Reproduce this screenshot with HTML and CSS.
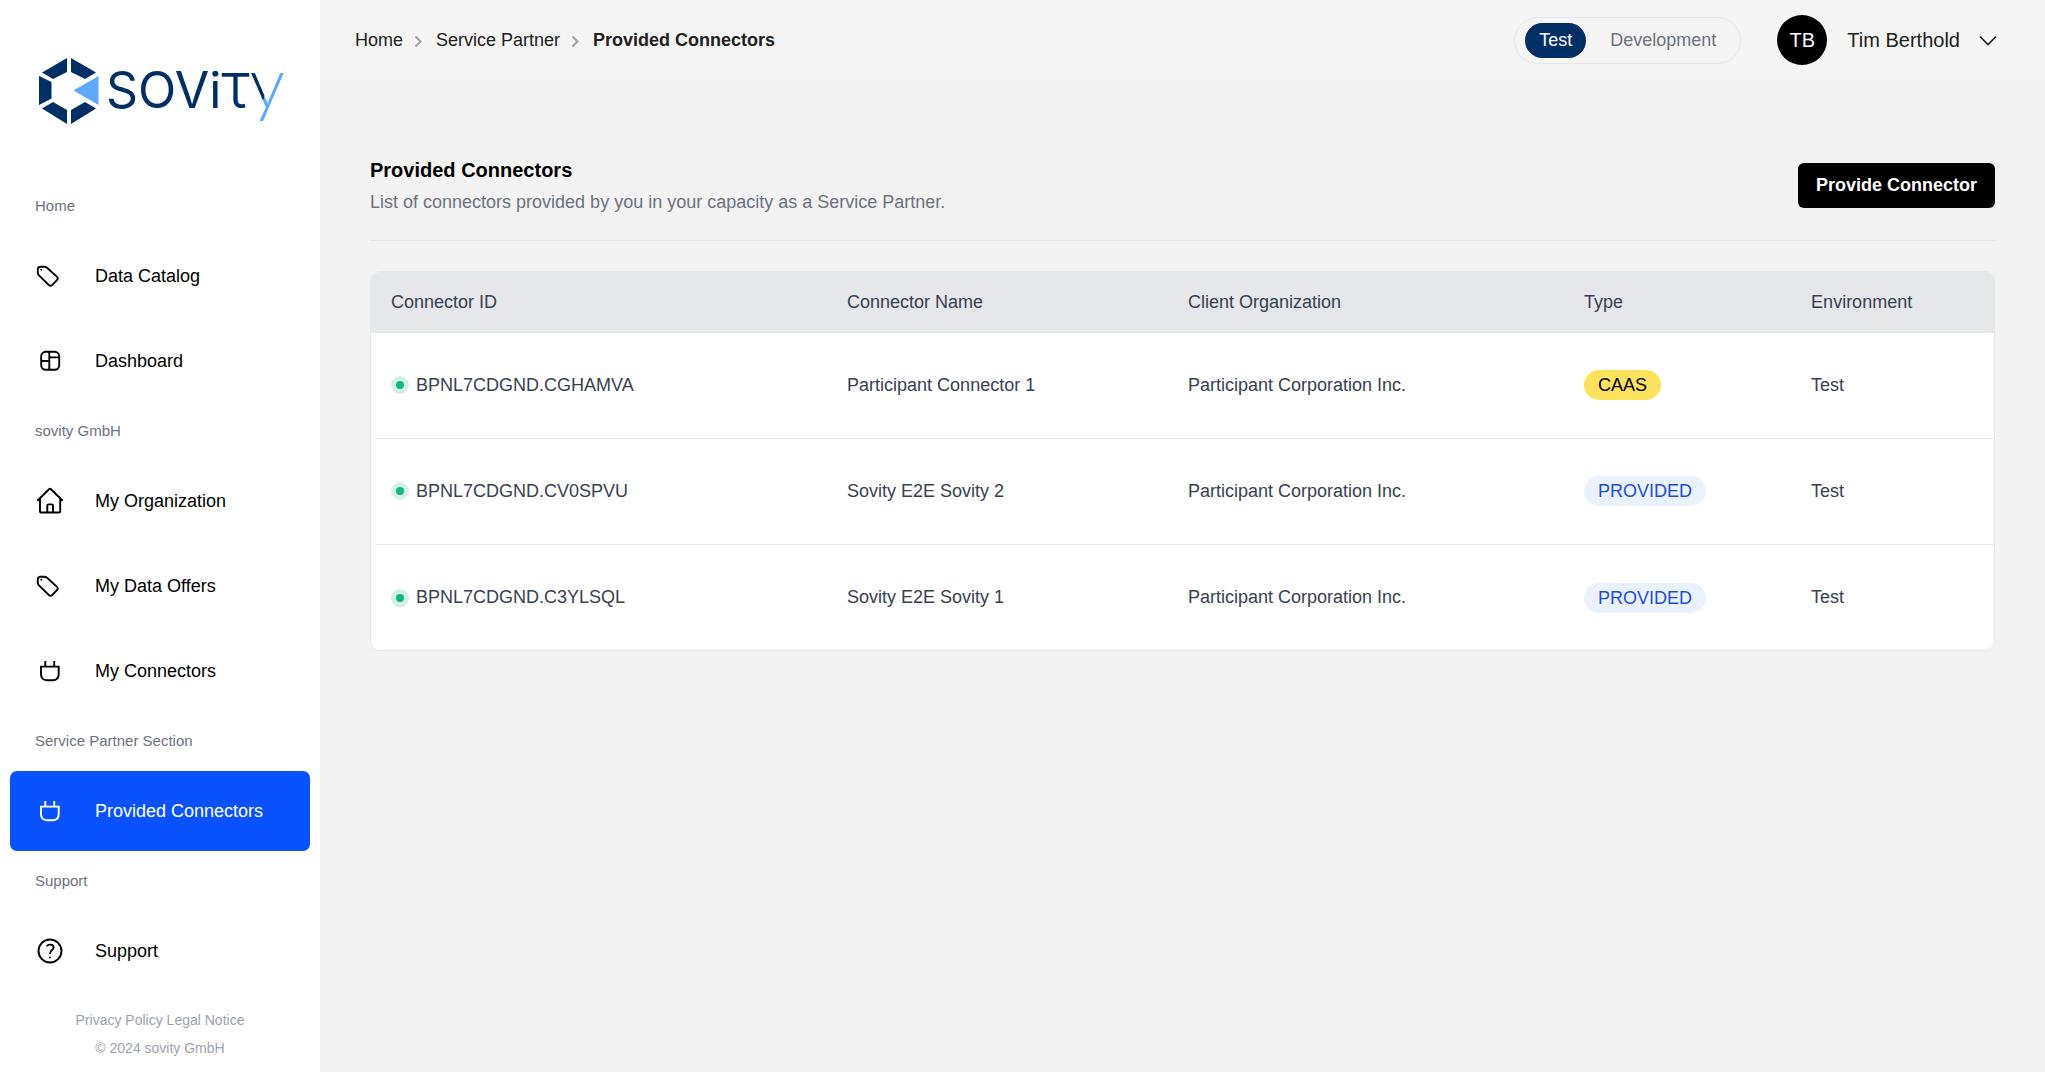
FILE: index.html
```html
<!DOCTYPE html>
<html lang="en">
<head>
<meta charset="utf-8">
<meta name="viewport" content="width=device-width, initial-scale=1">
<title>Provided Connectors</title>
<link rel="stylesheet" href="styles.css">
</head>
<body>
<svg class="sprite" aria-hidden="true">
  <symbol id="icon-tag" viewBox="0 0 30 30">
    <path d="M2.8 11.5V8.5Q2.8 5.7 5.6 5.7H9.2Q10.8 5.7 12 6.8L21.8 15.6Q23.6 17.2 22 19L17.4 23.8Q15.6 25.6 13.8 24L4 14.4Q2.8 13.2 2.8 11.5Z"/>
    <circle class="solid" cx="6.2" cy="8.7" r="0.9"/>
  </symbol>
  <symbol id="icon-dashboard" viewBox="0 0 30 30">
    <rect x="6.2" y="5.8" width="18" height="18" rx="4.5"/>
    <path d="M14.3 5.8V23.8M14.3 11.4H24.2M6.2 15H14.3"/>
  </symbol>
  <symbol id="icon-home" viewBox="0 0 30 30">
    <path d="M2.3 14.8L14 3.3Q15 2.4 16 3.3L27.7 14.8M5 12.5V25.5Q5 26.5 6 26.5H24.2Q25.2 26.5 25.2 25.5V12.5M12.3 26.5V19.6Q12.3 18.4 13.5 18.4H16.8Q18 18.4 18 19.6V26.5"/>
  </symbol>
  <symbol id="icon-plug" viewBox="0 0 30 30">
    <path d="M6 10.6H23.7V18.2Q23.7 24.2 17.7 24.2H12Q6 24.2 6 18.2ZM10.3 10.6V5M19.2 10.6V5"/>
  </symbol>
  <symbol id="icon-help" viewBox="0 0 30 30">
    <circle cx="15" cy="15" r="11.5"/>
    <path d="M11.8 10.2C13 7.9 18.6 7.9 18.6 11.4C18.6 14.2 15 14 15 18"/>
    <circle class="solid" cx="15" cy="21.5" r="1"/>
  </symbol>
  <symbol id="icon-next" viewBox="0 0 20 20">
    <path d="M7.5 6.5L12.500 11.5L7.500 16.500"/>
  </symbol>
</svg>

<div class="app">
  <aside class="sidebar">
    <a class="logo" href="#">
      <svg viewBox="0 0 244 68" role="img" aria-label="sovity">
        <defs>
          <linearGradient id="y-split" gradientUnits="userSpaceOnUse" x1="229" y1="31" x2="237" y2="34">
            <stop offset="0" stop-color="#002f66"/>
            <stop offset="0" stop-color="#5fa8ff"/>
          </linearGradient>
        </defs>
        <g class="logo-navy">
          <path d="M28 2V16L14 23L3 16.500ZM32 2V16L46 23L57 16.500ZM0 20L12.500 26V42.500L0 49ZM28 68V54L14 46L3 52.500ZM32 68V54L46 46L57 52.500Z"/>
          <text class="mark" x="67" y="52">SOVi<tspan class="mark-bar">τ</tspan><tspan class="mark-tail" fill="url(#y-split)">y</tspan></text>
        </g>
        <path class="logo-sky" d="M34.500 34.500L59.500 20V49Z"/>
      </svg>
    </a>
    <nav class="nav" aria-label="Main">
      <h2 class="nav-label">Home</h2>
      <ul class="nav-list">
        <li><a class="nav-item" href="#"><svg class="icon"><use href="#icon-tag"/></svg>Data Catalog</a></li>
        <li><a class="nav-item" href="#"><svg class="icon"><use href="#icon-dashboard"/></svg>Dashboard</a></li>
      </ul>
      <h2 class="nav-label">sovity GmbH</h2>
      <ul class="nav-list">
        <li><a class="nav-item" href="#"><svg class="icon"><use href="#icon-home"/></svg>My Organization</a></li>
        <li><a class="nav-item" href="#"><svg class="icon"><use href="#icon-tag"/></svg>My Data Offers</a></li>
        <li><a class="nav-item" href="#"><svg class="icon"><use href="#icon-plug"/></svg>My Connectors</a></li>
      </ul>
      <h2 class="nav-label">Service Partner Section</h2>
      <ul class="nav-list">
        <li><a class="nav-item active" href="#" aria-current="page"><svg class="icon"><use href="#icon-plug"/></svg>Provided Connectors</a></li>
      </ul>
      <h2 class="nav-label">Support</h2>
      <ul class="nav-list">
        <li><a class="nav-item" href="#"><svg class="icon"><use href="#icon-help"/></svg>Support</a></li>
      </ul>
    </nav>
    <footer class="legal">
      <div><a href="#">Privacy Policy</a> <a href="#">Legal Notice</a></div>
      <div>© 2024 sovity GmbH</div>
    </footer>
  </aside>

  <div class="page">
    <header class="topbar">
      <nav aria-label="Breadcrumb">
        <ol class="crumbs">
          <li><a href="#">Home</a><svg class="crumb-next"><use href="#icon-next"/></svg></li>
          <li><a href="#">Service Partner</a><svg class="crumb-next"><use href="#icon-next"/></svg></li>
          <li><a class="current" href="#" aria-current="page">Provided Connectors</a></li>
        </ol>
      </nav>
      <div class="account">
        <div class="env-switch">
          <button class="env selected" type="button" aria-pressed="true">Test</button>
          <button class="env" type="button" aria-pressed="false">Development</button>
        </div>
        <button class="user" type="button">
          <span class="avatar">TB</span>
          <span>Tim Berthold</span>
          <svg class="user-arrow" viewBox="0 0 24 24" aria-hidden="true"><path d="M4 8.500L12 16.500L20 8.500"/></svg>
        </button>
      </div>
    </header>

    <main class="content">
      <div class="heading">
        <div>
          <h1 class="title">Provided Connectors</h1>
          <p class="subtitle">List of connectors provided by you in your capacity as a Service Partner.</p>
        </div>
        <button class="primary" type="button">Provide Connector</button>
      </div>
      <div class="card">
        <table class="table">
          <colgroup><col class="col-id"><col class="col-name"><col class="col-org"><col class="col-type"><col></colgroup>
          <thead>
            <tr><th>Connector ID</th><th>Connector Name</th><th>Client Organization</th><th>Type</th><th>Environment</th></tr>
          </thead>
          <tbody>
            <tr>
              <td><span class="connector"><span class="status"></span>BPNL7CDGND.CGHAMVA</span></td>
              <td>Participant Connector 1</td>
              <td>Participant Corporation Inc.</td>
              <td><span class="badge caas">CAAS</span></td>
              <td>Test</td>
            </tr>
            <tr>
              <td><span class="connector"><span class="status"></span>BPNL7CDGND.CV0SPVU</span></td>
              <td>Sovity E2E Sovity 2</td>
              <td>Participant Corporation Inc.</td>
              <td><span class="badge">PROVIDED</span></td>
              <td>Test</td>
            </tr>
            <tr>
              <td><span class="connector"><span class="status"></span>BPNL7CDGND.C3YLSQL</span></td>
              <td>Sovity E2E Sovity 1</td>
              <td>Participant Corporation Inc.</td>
              <td><span class="badge">PROVIDED</span></td>
              <td>Test</td>
            </tr>
          </tbody>
        </table>
      </div>
    </main>
  </div>
</div>
</body>
</html>
```
FILE: styles.css
```css
*, *::before, *::after {
  box-sizing: border-box;
}

body {
  margin: 0;
  font: 18px/25px "Liberation Sans", Arial, sans-serif;
  color: #000;
  background: #f3f3f3;
}

h1, h2, p, ul, ol {
  margin: 0;
  padding: 0;
}

ul, ol {
  list-style: none;
}

a {
  color: inherit;
  text-decoration: none;
}

button {
  padding: 0;
  border: 0;
  background: none;
  color: inherit;
  font: inherit;
  cursor: pointer;
}

.sprite {
  display: none;
}

.app {
  display: flex;
  min-height: 100vh;
}

/* Sidebar */
.sidebar {
  flex: 0 0 320px;
  padding: 56px 10px 10px;
  background: #fff;
}

.logo {
  display: block;
  width: 244px;
  margin: 0 0 52px 29px;
}

.logo svg {
  display: block;
  overflow: visible;
}

.logo-navy {
  fill: #002f66;
}

.logo-sky {
  fill: #5fa8ff;
}

.mark {
  font: 400 50px Inter, sans-serif;
}

.mark-bar {
  font-size: 64px;
  font-weight: 300;
}

.mark-tail {
  font-family: Lato, sans-serif;
  font-size: 70px;
  font-weight: 300;
}

.nav-label {
  padding-left: 25px;
  font-size: 15px;
  font-weight: 400;
  line-height: 60px;
  color: #6b7280;
}

.nav-list {
  display: grid;
  gap: 5px;
}

.nav-item {
  display: flex;
  align-items: center;
  gap: 30px;
  height: 80px;
  padding: 0 25px;
  border-radius: 7px;
}

.nav-item.active {
  background: #0b52ff;
  color: #fff;
}

.icon {
  width: 30px;
  height: 30px;
  fill: none;
  stroke: currentColor;
  stroke-width: 1.9;
}

.solid {
  fill: currentColor;
  stroke: none;
}

.legal {
  margin-top: 15px;
  font-size: 14px;
  line-height: 28px;
  text-align: center;
  color: #9ca3af;
}

/* Top bar */
.page {
  flex: 1;
  min-width: 0;
}

.topbar {
  display: flex;
  align-items: center;
  justify-content: space-between;
  height: 80px;
  padding: 0 45px 0 35px;
  background: #f5f5f5;
  color: #212121;
}

.crumbs, .crumbs li {
  display: flex;
  align-items: center;
}

.crumb-next {
  width: 20px;
  height: 20px;
  margin: 0 8px 0 5px;
  fill: none;
  stroke: #9ca3af;
  stroke-width: 2;
}

.current {
  font-weight: 700;
}

.account {
  display: flex;
  align-items: center;
  gap: 36px;
}

.env-switch {
  display: flex;
  gap: 10px;
  padding: 5px 10px;
  border: 1px solid #e5e7eb;
  border-radius: 24px;
}

.env {
  height: 35px;
  padding: 0 14px;
  border-radius: 18px;
  color: #6b7280;
}

.env.selected {
  background: #002f66;
  color: #fff;
}

.user {
  display: flex;
  align-items: center;
  gap: 20px;
  font-size: 20px;
}

.avatar {
  width: 50px;
  border-radius: 50%;
  background: #000;
  color: #fff;
  line-height: 50px;
}

.user-arrow {
  width: 24px;
  height: 24px;
  margin-left: -4px;
  fill: none;
  stroke: currentColor;
  stroke-width: 1.6;
}

/* Content */
.content {
  padding: 75px 50px 50px;
}

.heading {
  display: flex;
  align-items: center;
  justify-content: space-between;
  padding-bottom: 25px;
  margin-bottom: 30px;
  border-bottom: 1px solid #e5e7eb;
}

.title {
  margin-bottom: 5px;
  font-size: 20px;
  line-height: 30px;
}

.subtitle {
  color: #6b7280;
}

.primary {
  height: 45px;
  padding: 0 18px;
  border-radius: 6px;
  background: #000;
  color: #fff;
  font-weight: 700;
}

.card {
  overflow: hidden;
  border: 1px solid #e5e7eb;
  border-radius: 10px;
  background: #fff;
}

.table {
  width: 100%;
  table-layout: fixed;
  border-collapse: collapse;
  color: #374151;
}

.col-id { width: 28.1%; }
.col-name { width: 21%; }
.col-org { width: 24.4%; }
.col-type { width: 14%; }

th, td {
  padding: 0 20px;
  text-align: left;
  font-weight: 400;
}

th {
  height: 61px;
  background: #e5e7eb;
}

td {
  height: 106px;
  padding-bottom: 2px;
  background: linear-gradient(#e5e7eb, #e5e7eb) 0 100% / 100% 1px no-repeat;
}

td:first-child {
  background-position: 5px 100%;
}

tr:last-child td {
  height: 105px;
  padding-bottom: 0;
  background: none;
}

.connector {
  display: flex;
  align-items: center;
  gap: 7px;
}

.status {
  width: 18px;
  height: 18px;
  border: 5px solid #d4f1e4;
  border-radius: 50%;
  background: #10b981;
}

.badge {
  display: inline-block;
  padding: 0 14px;
  border-radius: 15px;
  background: #ebf2ff;
  color: #1d4ed8;
  line-height: 30px;
}

.badge.caas {
  background: #fde25d;
  color: #000;
}
```
